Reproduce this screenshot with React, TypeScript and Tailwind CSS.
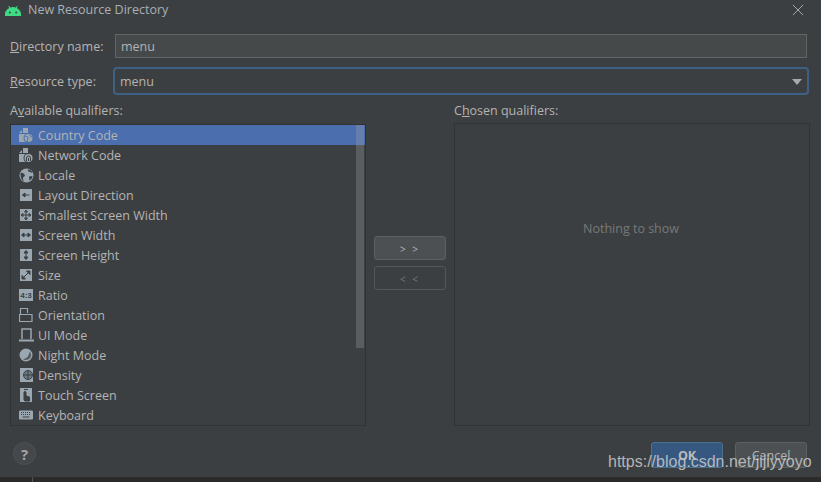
import React from 'react';

const ink = '#9aa7b0';
const bg = '#3c3f41';

// Small glyphs for the qualifier list
function Tile({ children }: { children: React.ReactNode }) {
  return (
    <svg width="14" height="14" viewBox="0 0 14 14" className="shrink-0">
      <rect width="12" height="12" x="1" y="1" fill={ink} />
      {children}
    </svg>
  );
}

function DocBadge({ kind, tint }: { kind: 'globe' | 'wifi'; tint: string }) {
  return (
    <svg width="16" height="16" viewBox="0 0 16 16" className="shrink-0">
      <path d="M1 6l3-3v3zM5 1h5v5H5zM1 7h9v8H1z" fill={ink} />
      <circle cx="10.500" cy="11" r="5" fill={tint} />
      <circle cx="10.500" cy="11" r="4" fill={ink} />
      {kind === 'globe' ? (
        <path d="M7.500 9.500c2-.5 3 1 2.500 2s-1 2-.5 3.500M12 7.500c-.5 1 .5 2.500 2.500 2.500" stroke={tint} strokeWidth="1" fill="none" />
      ) : (
        <path d="M8.500 14v-3a2 2 0 014 0v3M10.500 14v-3" stroke={tint} strokeWidth="1" fill="none" />
      )}
    </svg>
  );
}

const icons: Record<string, React.ReactNode> = {
  'Country Code': <DocBadge kind="globe" tint="#4b6eaf" />,
  'Network Code': <DocBadge kind="wifi" tint={bg} />,
  Locale: (
    <svg width="15" height="15" viewBox="0 0 15 15" className="shrink-0">
      <circle cx="7.500" cy="7.500" r="7" fill={ink} />
      <path d="M1.500 5c2-.5 3 .5 4 1.500s0 2-1 2.500-.5 3 .5 4.500c-2-1-3.500-3-3.500-8.500zM9 1.500c-.5 1.500.5 2.500 2 2.500l2.500 1c-.5-2-2.500-3.500-4.500-3.500zM10 8.500l3.500-.5c0 2-1.500 4-3 4.500z" fill={bg} />
    </svg>
  ),
  'Layout Direction': (
    <Tile>
      <path d="M3.500 7h7M3.500 7l2.500-2v4z" stroke={bg} fill={bg} />
    </Tile>
  ),
  'Smallest Screen Width': (
    <Tile>
      <path d="M7 2.500v9M2.500 7h9M7 2l-1.500 2h3zM7 12l-1.500-2h3zM2 7l2-1.500v3zM12 7l-2-1.500v3z" stroke={bg} fill={ink} strokeWidth="1" />
    </Tile>
  ),
  'Screen Width': (
    <Tile>
      <path d="M3 7h8M2.500 7l2.500-2v4zM11.500 7l-2.500-2v4z" stroke={bg} fill={bg} strokeWidth="1" />
    </Tile>
  ),
  'Screen Height': (
    <Tile>
      <path d="M7 3v8M7 2.500l-2 2.500h4zM7 11.500l-2-2.500h4z" stroke={bg} fill={bg} strokeWidth="1" />
    </Tile>
  ),
  Size: (
    <Tile>
      <path d="M3.500 10.500l7-7M11 3H7.500L11 6.500zM3 11h3.500L3 7.500z" stroke={bg} fill={bg} strokeWidth="1" />
    </Tile>
  ),
  Ratio: (
    <svg width="14" height="14" viewBox="0 0 14 14" className="shrink-0">
      <rect width="14" height="12" y="1" fill={ink} />
      <text x="7" y="10" textAnchor="middle" fontSize="8" fontWeight="700" fontFamily="Liberation Sans, sans-serif" fill={bg}>
        4:3
      </text>
    </svg>
  ),
  Orientation: (
    <svg width="14" height="16" viewBox="0 0 14 16" className="shrink-0">
      <path d="M1.500 7V1.500h7V6M.5 7.500h12.500v7H.5z" stroke={ink} strokeWidth="1.200" fill="none" />
    </svg>
  ),
  'UI Mode': (
    <svg width="15" height="14" viewBox="0 0 15 14" className="shrink-0">
      <path d="M3 11V1h9v10" stroke={ink} strokeWidth="1.500" fill="none" />
      <rect y="11.500" width="15" height="2" fill={ink} />
    </svg>
  ),
  'Night Mode': (
    <svg width="14" height="14" viewBox="0 0 14 14" className="shrink-0">
      <circle cx="7" cy="7" r="6.500" fill={ink} />
      <path d="M10.500 3.500a5 5 0 011.500 3.500 5 5 0 01-5 5 5 5 0 01-3-1c3.500 0 6.500-3.500 6.500-7.500z" fill="#54585b" />
    </svg>
  ),
  Density: (
    <svg width="13" height="14" viewBox="0 0 13 14" className="shrink-0">
      <rect width="13" height="14" fill={ink} />
      <circle cx="8" cy="7" r="4.500" fill="#6f7a82" stroke={bg} strokeWidth="1" />
      <path d="M4 7h8M8 3v8" stroke={bg} />
    </svg>
  ),
  'Touch Screen': (
    <svg width="12" height="15" viewBox="0 0 12 15" className="shrink-0">
      <rect width="12" height="14" fill={ink} />
      <path d="M4 12V4.500a1 1 0 012 0V8l3.500 1V13H5z M4 1.500h4" fill={bg} stroke={bg} />
    </svg>
  ),
  Keyboard: (
    <svg width="14" height="10" viewBox="0 0 14 10" className="shrink-0">
      <rect width="14" height="9" rx="1" y=".5" fill={ink} />
      <path d="M2 2.500h10M2 4.500h10" stroke={bg} strokeDasharray="1 1" />
      <path d="M3.500 7h7" stroke={bg} />
    </svg>
  ),
};

const qualifiers = [
  'Country Code',
  'Network Code',
  'Locale',
  'Layout Direction',
  'Smallest Screen Width',
  'Screen Width',
  'Screen Height',
  'Size',
  'Ratio',
  'Orientation',
  'UI Mode',
  'Night Mode',
  'Density',
  'Touch Screen',
  'Keyboard',
];

function QualifierRow({ name, selected }: { name: string; selected?: boolean }) {
  return (
    <div className={`flex h-5 items-center ${selected ? 'bg-[#4b6eaf]' : ''}`}>
      <span className="flex w-[27px] shrink-0 justify-center pl-[3px]">{icons[name]}</span>
      <span className="whitespace-nowrap pt-[2px]">{name}</span>
    </div>
  );
}

export default function App() {
  return (
    <div className="relative flex h-[482px] w-[821px] flex-col overflow-hidden bg-[#3c3f41] font-['Open_Sans','Noto_Sans',sans-serif] text-[12.5px] leading-5 text-[#b4b4b4]">
      {/* title bar */}
      <div className="flex h-[20px] items-center pl-[5px] pr-[17px]">
        <svg width="16" height="11" viewBox="0 0 16 11" className="mr-[7px] shrink-0">
          <path d="M0 10.500a8 8 0 0116 0zM3.500 1l2 3M12.500 1l-2 3" fill="#3ddc84" stroke="#3ddc84" />
          <circle cx="4.800" cy="7.500" r="1" fill="#3c3f41" />
          <circle cx="11.200" cy="7.500" r="1" fill="#3c3f41" />
        </svg>
        <span className="text-[#a9b0b4]">New Resource Directory</span>
        <svg width="12" height="12" viewBox="0 0 12 12" className="ml-auto">
          <path d="M1 1l10 10M11 1L1 11" stroke="#a7a7a7" strokeWidth="1" />
        </svg>
      </div>

      <div className="mt-[14px] flex h-6 items-center pl-[10px] pr-[14px]">
        <label className="w-[105px] shrink-0 pt-[2px]">
          <span className="underline">D</span>irectory name:
        </label>
        <div className="flex h-6 flex-1 items-center border border-[#646464] bg-[#45494a] pl-[5px] pt-[2px]">menu</div>
      </div>

      <div className="mt-[11px] flex h-6 items-center pl-[10px] pr-[14px]">
        <label className="w-[105px] shrink-0 pt-[2px]">
          <span className="underline">R</span>esource type:
        </label>
        <div className="flex h-6 flex-1 items-center justify-between rounded-[2px] bg-[#3c3f41] pl-[5px] pr-[5px] pt-[2px] outline-2 outline-[#3d6185]">
          menu
          <svg width="10" height="6" viewBox="0 0 10 6">
            <path d="M0 0h10L5 6z" fill="#a9a9a9" />
          </svg>
        </div>
      </div>

      <div className="mt-[7px] flex flex-1 pl-[10px] pr-[11px]">
        <div className="flex w-[356px] flex-col">
          <div className="h-[20px] pt-[1px]">
            A<span className="underline">v</span>ailable qualifiers:
          </div>
          <div className="relative mt-[4px] h-[302px] overflow-hidden border border-[#323232]">
            {qualifiers.map((q, i) => (
              <QualifierRow key={q} name={q} selected={i === 0} />
            ))}
            {/* scrollbar thumb */}
            <div className="absolute right-[1px] top-0 h-[223px] w-2 bg-[#a6a6a6]/30" />
          </div>
        </div>

        <div className="flex w-[88px] flex-col items-center gap-[6px] pt-[136px]">
          <button className="flex h-6 w-[72px] items-center justify-center rounded-[3px] border border-[#5e6060] bg-[#4c5052] pt-[2px] text-[10px] tracking-[2px]">
            &gt; &gt;
          </button>
          <button className="flex h-6 w-[72px] items-center justify-center rounded-[3px] border border-[#535557] pt-[2px] text-[10px] tracking-[2px] text-[#777777]">
            &lt; &lt;
          </button>
        </div>

        <div className="flex w-[356px] flex-col">
          <div className="h-[20px] pt-[1px]">
            C<span className="underline">h</span>osen qualifiers:
          </div>
          <div className="mt-[3px] flex h-[303px] items-start justify-center border border-[#323232] pr-[2px] pt-[95px] text-[#787878]">
            Nothing to show
          </div>
        </div>
      </div>

      {/* footer */}
      <div className="flex h-[51px] items-start pl-[13px] pr-[14px] pt-[16px]">
        <div className="flex h-[23px] w-[23px] items-center justify-center rounded-full border border-[#4f5254] bg-[#45484a] text-[15px] font-bold text-[#a4a4a4]">
          ?
        </div>
        <button className="ml-auto flex h-[26px] w-[72px] items-center justify-center rounded-[3px] border border-[#4c708c] bg-[#365880] pt-[2px] font-bold text-[#bbbbbb]">
          OK
        </button>
        <button className="ml-[12px] flex h-[26px] w-[72px] items-center justify-center rounded-[3px] border border-[#5e6060] bg-[#4c5052] pt-[2px]">
          Cancel
        </button>
      </div>

      {/* window below the dialog */}
      <div className="flex h-[5px] bg-[#2b2b2b]">
        <div className="ml-[32px] w-px bg-[#555555]" />
      </div>

      <span className="absolute left-[608px] top-[451px] font-['Liberation_Sans',sans-serif] text-[16px] leading-[22px] text-[#c4c4c4]/90">
        https://blog.csdn.net/jijiyyoyo
      </span>
    </div>
  );
}
